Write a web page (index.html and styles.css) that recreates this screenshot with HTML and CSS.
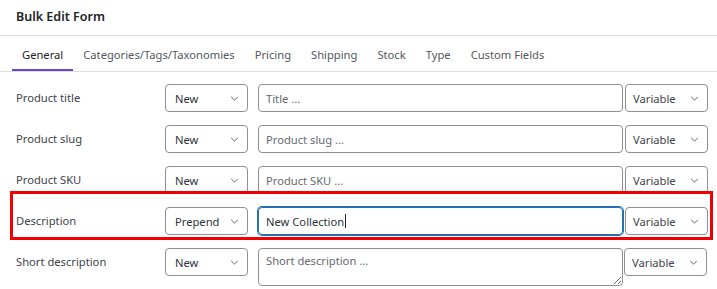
FILE: index.html
```html
<!DOCTYPE html>
<html lang="en">
<head>
    <meta charset="UTF-8">
    <title>Bulk Edit Form</title>
    <link rel="stylesheet" href="styles.css">
</head>
<body>
    <div class="panel">
        <!-- header -->
        <div class="panel-header">Bulk Edit Form</div>

        <!-- tabs -->
        <div class="tabs">
            <div class="tab active">General</div>
            <div class="tab">Categories/Tags/Taxonomies</div>
            <div class="tab">Pricing</div>
            <div class="tab">Shipping</div>
            <div class="tab">Stock</div>
            <div class="tab">Type</div>
            <div class="tab">Custom Fields</div>
        </div>

        <!-- fields -->
        <div class="fields">
            <div class="field-row">
                <div class="field-label">Product title</div>
                <div class="select">New<svg class="chevron" viewBox="0 0 10 6"><path d="M1 1l4 4 4-4"/></svg></div>
                <div class="text-input placeholder">Title ...</div>
                <div class="select var">Variable<svg class="chevron" viewBox="0 0 10 6"><path d="M1 1l4 4 4-4"/></svg></div>
            </div>
            <div class="field-row">
                <div class="field-label">Product slug</div>
                <div class="select">New<svg class="chevron" viewBox="0 0 10 6"><path d="M1 1l4 4 4-4"/></svg></div>
                <div class="text-input placeholder">Product slug ...</div>
                <div class="select var">Variable<svg class="chevron" viewBox="0 0 10 6"><path d="M1 1l4 4 4-4"/></svg></div>
            </div>
            <div class="field-row">
                <div class="field-label">Product SKU</div>
                <div class="select">New<svg class="chevron" viewBox="0 0 10 6"><path d="M1 1l4 4 4-4"/></svg></div>
                <div class="text-input placeholder">Product SKU ...</div>
                <div class="select var">Variable<svg class="chevron" viewBox="0 0 10 6"><path d="M1 1l4 4 4-4"/></svg></div>
            </div>
            <!-- highlighted row, red box drawn over it -->
            <div class="field-row highlight">
                <div class="field-label">Description</div>
                <div class="select">Prepend<svg class="chevron" viewBox="0 0 10 6"><path d="M1 1l4 4 4-4"/></svg></div>
                <div class="text-input focused">New Collection<span class="caret"></span></div>
                <div class="select var">Variable<svg class="chevron" viewBox="0 0 10 6"><path d="M1 1l4 4 4-4"/></svg></div>
                <div class="mark-box"></div>
            </div>
            <div class="field-row tall">
                <div class="field-label">Short description</div>
                <div class="select">New<svg class="chevron" viewBox="0 0 10 6"><path d="M1 1l4 4 4-4"/></svg></div>
                <textarea class="text-area" placeholder="Short description ..."></textarea>
                <div class="select var">Variable<svg class="chevron" viewBox="0 0 10 6"><path d="M1 1l4 4 4-4"/></svg></div>
            </div>
        </div>
    </div>
</body>
</html>
```

FILE: styles.css
```css
body {
    margin: 0;
    background-color: #fff;
    font-family: "Noto Sans", "Open Sans", sans-serif;
    font-size: 11.2px;
    color: #2c3338;
    overflow: hidden;
}

.panel {
    width: 717px;
}

/* header */
.panel-header {
    height: 35px;
    line-height: 34px;
    padding: 0 16px;
    font-size: 12.5px;
    font-weight: 600;
    color: #1d2327;
    box-sizing: border-box;
    border-bottom: 1px solid #dcdcde;
    height: 36px;
}

/* tabs */
.tabs {
    display: flex;
    height: 36px;
    padding-left: 12px;
    box-sizing: border-box;
    border-bottom: 1px solid #dcdcde;
}

.tab {
    padding: 2px 10px 0;
    line-height: 33px;
    color: #50575e;
    box-sizing: border-box;
    height: 35px;
}

.tab.active {
    color: #1d2327;
    border-bottom: 2px solid #6b44d4;
}

/* rows */
.fields {
    padding: 12px 9px 0 16px;
}

.field-row {
    position: relative;
    display: flex;
    align-items: flex-start;
    margin-bottom: 13px;
}

.field-label {
    width: 149px;
    line-height: 28px;
    color: #3c434a;
}

.select {
    display: flex;
    align-items: center;
    justify-content: space-between;
    width: 83px;
    height: 28px;
    padding: 0 8px 0 9px;
    box-sizing: border-box;
    border: 1px solid #8c8f94;
    border-radius: 4px;
    color: #2c3338;
}

.select.var {
    margin-left: 2px;
    padding-left: 7px;
    color: #3c434a;
}

.chevron {
    width: 9px;
    height: 5px;
    fill: none;
    stroke: #50575e;
    stroke-width: 1.1;
}

.text-input {
    flex: 1;
    height: 28px;
    margin-left: 10px;
    padding: 0 7px;
    box-sizing: border-box;
    border: 1px solid #8c8f94;
    border-radius: 4px;
    display: flex;
    align-items: center;
}

.placeholder {
    color: #646970;
}

.text-input.focused {
    border-color: #2271b1;
    box-shadow: 0 0 0 1px #2271b1;
    color: #2c3338;
}

.caret {
    display: inline-block;
    width: 1px;
    height: 14px;
    margin-left: 1px;
    background-color: #1d2327;
}

.text-area {
    flex: 1;
    height: 38px;
    margin: 0 0 0 10px;
    padding: 4px 7px;
    box-sizing: border-box;
    border: 1px solid #8c8f94;
    border-radius: 4px;
    font-family: inherit;
    font-size: 11.2px;
    color: #2c3338;
}

.text-area::placeholder {
    color: #646970;
}

.field-row.tall {
    padding-right: 1px;
}

.field-row.tall .select.var {
    margin-left: 1px;
}

/* red annotation box over the description row */
.mark-box {
    position: absolute;
    top: -16px;
    bottom: -5px;
    left: -6px;
    right: -5px;
    border: 3px solid #f00000;
    pointer-events: none;
}
```
